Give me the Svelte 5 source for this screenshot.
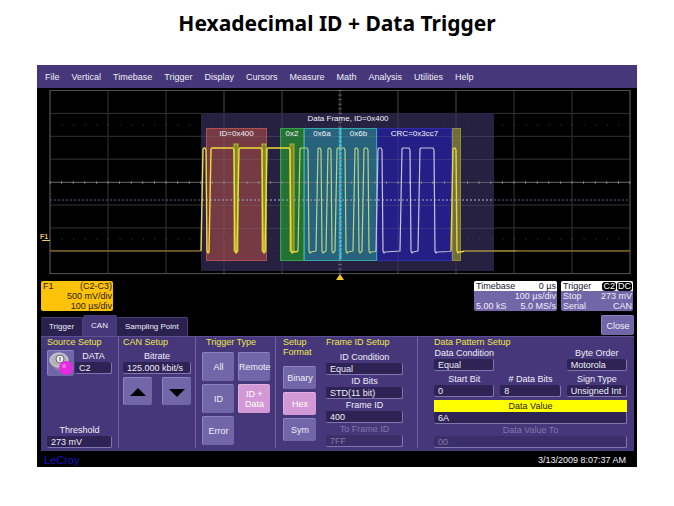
<script>
    let menus = ['File', 'Vertical', 'Timebase', 'Trigger', 'Display', 'Cursors', 'Measure', 'Math', 'Analysis', 'Utilities', 'Help'];
    let tabs = ['Trigger', 'CAN', 'Sampling Point'];
    let activeTab = 'CAN';

    let triggerTypes = ['All', 'Remote', 'ID', 'ID + Data', 'Error'];
    let triggerType = 'ID + Data';

    let formats = ['Binary', 'Hex', 'Sym'];
    let format = 'Hex';

    let source = 'C2';
    let threshold = '273 mV';
    let bitrate = '125.000 kbit/s';

    let frameFields = [
        { id: 'id-condition', label: 'ID Condition', value: 'Equal' },
        { id: 'id-bits', label: 'ID Bits', value: 'STD(11 bit)' },
        { id: 'frame-id', label: 'Frame ID', value: '400' },
        { id: 'to-frame-id', label: 'To Frame ID', value: '7FF', disabled: true }
    ];

    let dataCondition = 'Equal';
    let byteOrder = 'Motorola';
    let startBit = '0';
    let dataBits = '8';
    let signType = 'Unsigned Int';
    let dataValue = '6A';
    let dataValueTo = '00';

    // Graticule: 10 x 8 divisions
    const columns = Array.from({ length: 11 }, (_, i) => 50 + i * 58);
    const rows = Array.from({ length: 9 }, (_, i) => 90.5 + i * 22.9);
    const minorX = Array.from({ length: 51 }, (_, i) => 50 + i * 11.6);
    const minorY = Array.from({ length: 41 }, (_, i) => 90.5 + i * 4.58);

    // Decoded fields drawn over the trace
    const fields = [
        { x: 206, w: 61, fill: '#793c43', stroke: '#b04f51', text: 'ID=0x400' },
        { x: 280, w: 24, fill: '#247634', stroke: '#34a050', text: '0x2' },
        { x: 304, w: 36, fill: '#276780', stroke: '#36a5a8', text: '0x6a' },
        { x: 340, w: 37, fill: '#276780', stroke: '#36a5a8', text: '0x6b' },
        { x: 377, w: 75, fill: '#24208a', stroke: '#302cac', text: 'CRC=0x3cc7' },
        { x: 452, w: 9, fill: '#757238', stroke: '#918c38', text: '' }
    ];
    const stuffBits = [234, 262, 290];

    // Each pulse is [start of rise, start of fall]
    const idPulses = [[201, 205], [209, 233], [237, 261], [265, 289]];
    const dataPulses = [[298, 307], [316, 320], [326, 330], [335, 344], [353, 357], [362, 367]];
    const crcPulses = [[376, 381], [400, 409], [418, 433]];
    const ackPulses = [[451, 455]];

    const trace = (start, pulses, end) => {
        let d = `M${start} 251`;
        for (const [rise, fall] of pulses) {
            d += `L${rise} 251L${rise + 2} 149L${rise + 3} 148H${fall}L${fall + 1} 150L${fall + 2} 251L${fall + 3} 253L${fall + 4} 252`;
        }
        return d + `L${end - 1} 251.5L${end} 251`;
    };
</script>

<h1>Hexadecimal ID + Data Trigger</h1>

<main>
    <nav>
        {#each menus as item}
            <button class="menu-item">{item}</button>
        {/each}
    </nav>

    <svg class="screen" viewBox="37 88 600 193">
        <g stroke="#343434" fill="none">
            {#each columns as x}
                <path d="M{x} 90V274" />
            {/each}
            {#each rows as y}
                <path d="M50 {y}H630" />
            {/each}
        </g>
        <rect x="50" y="90.5" width="580" height="183" fill="none" stroke="#4c4c4c" />

        <!-- frame overlay -->
        <rect x="201" y="113" width="293" height="158" fill="#2a2547" fill-opacity="0.9" />
        {#each fields as f}
            <rect x={f.x} y="128" width={f.w} height="133" fill={f.fill} fill-opacity="0.95" />
            <rect x={f.x + 0.5} y="128.5" width={f.w - 1} height="132" fill="none" stroke={f.stroke} />
        {/each}

        <!-- axes and trigger level -->
        <path d="M50 182.5H630" stroke="#8c8c8c" stroke-opacity="0.5" />
        {#each columns.slice(3, 8) as x}
            <path d="M{x} 90V274" stroke="#888" stroke-opacity="0.2" />
        {/each}
        <path d="M202 136.5H494M202 159.5H494M202 205.5H494M202 228.5H494" stroke="#888" stroke-opacity="0.2" />
        {#each minorX as x}
            <path d="M{x} 181V184" stroke="#9a9a9a" stroke-opacity="0.7" />
            <path d="M{x} 125h1M{x} 239h1" stroke="#444" />
        {/each}
        {#each minorY as y}
            <path d="M338 {y}H342" stroke="#8a8a8a" stroke-opacity="0.6" />
        {/each}
        <path d="M340.500 128V260" stroke="#3bc3e6" stroke-dasharray="3 1" stroke-width="2" />
        <path d="M50 200H630" stroke="#7270b0" stroke-opacity="0.8" stroke-dasharray="2 2" />
        <path d="M202 200H494" stroke="#b8b8c8" stroke-opacity="0.7" stroke-dasharray="2 2" />

        {#each stuffBits as x}
            <rect {x} y="144" width="4" height="107" fill="#7c8a24" stroke="#b8b82a" />
        {/each}

        <g fill="none" stroke-linejoin="round">
            <path d="M50 251H201" stroke="#b98b2b" />
            <path d={trace(201, idPulses, 298)} stroke="#f0dc3e" stroke-width="1.4" />
            <path d={trace(298, dataPulses, 376)} stroke="#b8d488" stroke-width="1.2" />
            <path d={trace(376, crcPulses, 451)} stroke="#c9c2dc" stroke-width="1.2" />
            <path d={trace(451, ackPulses, 464)} stroke="#e6d840" stroke-width="1.4" />
            <path d="M464 251H516" stroke="#dcc43c" />
            <path d="M516 251H630" stroke="#b98b2b" />
        </g>

        <g class="decode">
            <text x="348" y="121">Data Frame, ID=0x400</text>
            {#each fields as f}
                <text x={f.x + f.w / 2} y="136">{f.text}</text>
            {/each}
        </g>

        <text class="marker" x="40" y="239">F1</text>
        <path d="M42 240.500H50" stroke="#e8c860" />
        <path d="M340 274L344 280H336Z" fill="#f5c928" />
    </svg>

    <section class="descriptors">
        <div class="channel">
            <p><span>F1</span><span>(C2-C3)</span></p>
            <p><span></span><span>500 mV/div</span></p>
            <p><span></span><span>100 µs/div</span></p>
        </div>
        <div class="box timebase">
            <p class="top"><span>Timebase</span><span>0 µs</span></p>
            <p><span></span><span>100 µs/div</span></p>
            <p><span>5.00 kS</span><span>5.0 MS/s</span></p>
        </div>
        <div class="box trigger">
            <p class="top"><span>Trigger</span><span><b>C2</b><b>DC</b></span></p>
            <p><span>Stop</span><span>273 mV</span></p>
            <p><span>Serial</span><span>CAN</span></p>
        </div>
    </section>

    <div class="tabs">
        {#each tabs as tab}
            <button class="tab" class:active={tab === activeTab} on:click={() => (activeTab = tab)}>{tab}</button>
        {/each}
        <button class="key close">Close</button>
    </div>

    <section class="panel">
        <div class="group source">
            <h2>Source Setup</h2>
            <div class="source-row">
                <button class="key probe" aria-label="Select source">
                    <svg viewBox="0 0 26 26">
                        <path d="M2 9Q4 19 13 20L20 14V9Z" fill="#8a8692" />
                        <ellipse cx="11" cy="9" rx="9" ry="7" fill="#b4b0b8" stroke="#dcdce0" />
                        <ellipse cx="12" cy="8" rx="4" ry="4" fill="#f0f0f0" stroke="#6c6878" />
                        <path d="M12 6V10" stroke="#4c4858" />
                        <circle cx="18" cy="17" r="7" fill="#e52be0" />
                        <circle cx="16" cy="15" r="2" fill="#f470f0" />
                    </svg>
                </button>
                <div class="field">
                    <label for="source">DATA</label>
                    <input id="source" bind:value={source}>
                </div>
            </div>
            <div class="field threshold">
                <label for="threshold">Threshold</label>
                <input id="threshold" bind:value={threshold}>
            </div>
        </div>

        <div class="group can">
            <h2>CAN Setup</h2>
            <div class="field">
                <label for="bitrate">Bitrate</label>
                <input id="bitrate" bind:value={bitrate}>
            </div>
            <div class="arrows">
                <button class="key" aria-label="Increase bitrate">
                    <svg viewBox="0 0 28 28"><path d="M6 18L14 10L22 18Z" /></svg>
                </button>
                <button class="key" aria-label="Decrease bitrate">
                    <svg viewBox="0 0 28 28"><path d="M6 11H22L14 19Z" /></svg>
                </button>
            </div>
        </div>

        <div class="group types">
            <h2>Trigger Type</h2>
            <div class="type-keys">
                {#each triggerTypes as type}
                    <button class="key" class:on={type === triggerType} on:click={() => (triggerType = type)}>{type}</button>
                {/each}
            </div>
        </div>

        <div class="group format">
            <h2>Setup Format</h2>
            <div class="format-keys">
                {#each formats as f}
                    <button class="key" class:on={f === format} on:click={() => (format = f)}>{f}</button>
                {/each}
            </div>
        </div>

        <div class="group frame">
            <h2>Frame ID Setup</h2>
            <div class="frame-fields">
                {#each frameFields as f}
                    <div class="field">
                        <label for={f.id} class:dim={f.disabled}>{f.label}</label>
                        <input id={f.id} bind:value={f.value} disabled={f.disabled}>
                    </div>
                {/each}
            </div>
        </div>

        <div class="group pattern">
            <h2>Data Pattern Setup</h2>
            <div class="pattern-grid">
                <div class="field">
                    <label for="data-condition">Data Condition</label>
                    <input id="data-condition" bind:value={dataCondition}>
                </div>
                <div class="field last">
                    <label for="byte-order">Byte Order</label>
                    <input id="byte-order" bind:value={byteOrder}>
                </div>
                <div class="field">
                    <label for="start-bit">Start Bit</label>
                    <input id="start-bit" bind:value={startBit}>
                </div>
                <div class="field">
                    <label for="data-bits"># Data Bits</label>
                    <input id="data-bits" bind:value={dataBits}>
                </div>
                <div class="field">
                    <label for="sign-type">Sign Type</label>
                    <input id="sign-type" bind:value={signType}>
                </div>
            </div>
            <div class="field">
                <label for="data-value" class="focus">Data Value</label>
                <input id="data-value" bind:value={dataValue}>
            </div>
            <div class="field">
                <label for="data-value-to" class="dim">Data Value To</label>
                <input id="data-value-to" bind:value={dataValueTo} disabled>
            </div>
        </div>
    </section>

    <footer>
        <span class="logo">LeCroy</span>
        <time>3/13/2009 8:07:37 AM</time>
    </footer>
</main>

<style>
    :global(body) {
        background: #fff;
    }

    h1 {
        margin: 0;
        padding: 9px 0 28px;
        font: bold 21px/28px "Noto Sans", Tahoma, sans-serif;
        color: #000;
        text-align: center;
    }

    main {
        margin: 0 37px;
        background: #000;
        color: #f0eef8;
        font: 9px/12px "Liberation Sans", Arial, sans-serif;
    }

    button,
    input {
        box-sizing: border-box;
        min-width: 0;
        margin: 0;
        border: 0;
        font: inherit;
        color: inherit;
    }

    button {
        padding: 0;
        cursor: pointer;
    }

    p,
    h2 {
        margin: 0;
    }

    nav {
        display: flex;
        gap: 12px;
        padding: 0 8px;
        height: 23px;
        background: #45377a;
    }

    .menu-item {
        background: none;
    }

    .screen {
        display: block;
        width: 100%;
    }

    .decode text {
        fill: #f4f4fa;
        font-size: 8px;
        text-anchor: middle;
    }

    .marker {
        fill: #e8c860;
        font-size: 7px;
        font-weight: bold;
    }

    .descriptors {
        display: flex;
        gap: 4px;
        padding: 0 4px;
        line-height: 10px;
    }

    .descriptors p {
        display: flex;
        justify-content: space-between;
        height: 10px;
        padding: 0 1px 0 2px;
        white-space: nowrap;
    }

    .channel {
        width: 72px;
        margin-right: auto;
        border-radius: 2px;
        background: #fdc20a;
        color: #2c2000;
    }

    .box {
        border-radius: 2px;
        background: #7166a8;
        overflow: hidden;
    }

    .timebase {
        width: 83px;
    }

    .trigger {
        width: 72px;
    }

    .descriptors .top {
        background: #fff;
        color: #1a1530;
    }

    .top b {
        display: inline-block;
        padding: 0 1px;
        margin-left: 1px;
        border-radius: 3px;
        background: #000;
        color: #fff;
        font-weight: normal;
        line-height: 9px;
    }

    .tabs {
        display: flex;
        align-items: flex-end;
        height: 21px;
        padding: 4px 3px 0 4px;
    }

    .tab {
        height: 19px;
        padding: 0 8px;
        border-top: 1px solid #4a4078;
        border-right: 1px solid #4a4078;
        border-radius: 2px 2px 0 0;
        background: #2a2150;
        font-size: 8px;
    }

    .tab.active {
        height: 21px;
        background: #45377a;
    }

    .key {
        border-top: 1px solid #8d83be;
        border-left: 1px solid #8d83be;
        border-radius: 2px;
        background: #7166a8;
        line-height: 10px;
    }

    .key.on {
        border-color: #e0b0e4;
        background: #d398d6;
        color: #fff;
    }

    .key svg {
        display: block;
        width: 100%;
    }

    .close {
        align-self: flex-start;
        width: 33px;
        height: 20px;
        margin-left: auto;
    }

    .panel {
        display: grid;
        grid-template-columns: 77fr 77fr 80fr 51fr 91fr 217fr;
        margin: 0 3px 0 4px;
        border-top: 1px solid #5d5192;
        background: #45377a;
    }

    .group {
        display: flex;
        flex-direction: column;
        min-width: 0;
        margin-bottom: 3px;
        border-left: 1px solid #6e6399;
    }

    .source,
    .frame {
        border-left: 0;
    }

    h2 {
        color: #f0e848;
        font-size: 9px;
        font-weight: normal;
        line-height: 10px;
        white-space: nowrap;
    }

    .field {
        display: flex;
        flex-direction: column;
        min-width: 0;
    }

    label {
        text-align: center;
        white-space: nowrap;
    }

    input {
        width: 100%;
        height: 12px;
        padding: 0 4px;
        border-right: 1px solid #7f76ae;
        border-bottom: 1px solid #7f76ae;
        border-radius: 2px;
        background: #2d2355;
        line-height: 11px;
    }

    input:disabled {
        background: #3b2f6a;
        color: #7f76a8;
    }

    .dim {
        color: #7f76a8;
    }

    .source {
        padding: 0 6px;
    }

    .source-row {
        display: grid;
        grid-template-columns: 27px 1fr;
        gap: 1px;
        margin-top: 3px;
    }

    .probe {
        height: 26px;
    }

    .threshold {
        margin-top: auto;
    }

    .can {
        padding: 0 4px;
    }

    .can .field {
        margin-top: 3px;
    }

    .arrows {
        display: flex;
        justify-content: space-between;
        margin-top: 3px;
    }

    .arrows .key {
        width: 29px;
        height: 28px;
    }

    .types {
        padding: 0 5px 0 6px;
    }

    .types h2 {
        padding-left: 4px;
    }

    .type-keys {
        display: grid;
        grid-template-columns: 1fr 1fr;
        gap: 3px 4px;
        margin-top: 5px;
    }

    .type-keys .key {
        height: 29px;
    }

    .format {
        padding: 0 10px 0 7px;
    }

    .format h2 {
        white-space: normal;
    }

    .format-keys {
        display: flex;
        flex-direction: column;
        gap: 3px;
        margin-top: 9px;
    }

    .format-keys .key {
        height: 23px;
    }

    .frame {
        padding-right: 14px;
    }

    .frame-fields {
        margin-top: 4px;
    }

    .pattern {
        padding: 0 7px 0 16px;
    }

    .pattern-grid {
        display: grid;
        grid-template-columns: 1fr 1fr 1fr;
        gap: 2px 6px;
        margin-bottom: 3px;
    }

    .last {
        grid-column: 3;
    }

    .focus {
        background: #ffff00;
        color: #2c2000;
    }

    footer {
        display: flex;
        justify-content: space-between;
        align-items: center;
        height: 14px;
        padding: 2px 11px 0 7px;
    }

    .logo {
        color: #1414c8;
        font-size: 11px;
    }
</style>
